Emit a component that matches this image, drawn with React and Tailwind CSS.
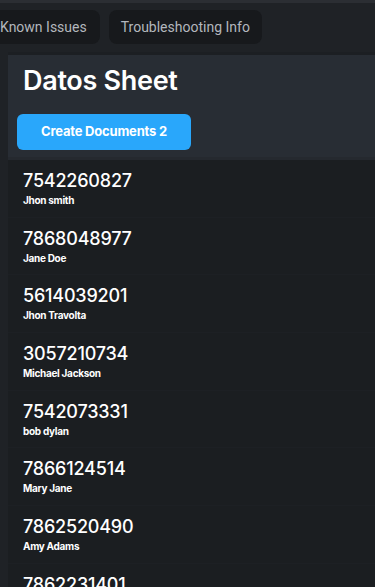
const rows = [
  ['7542260827', 'Jhon smith'],
  ['7868048977', 'Jane Doe'],
  ['5614039201', 'Jhon Travolta'],
  ['3057210734', 'Michael Jackson'],
  ['7542073331', 'bob dylan'],
  ['7866124514', 'Mary Jane'],
  ['7862520490', 'Amy Adams'],
  ['7862231401', 'Lisa Ray'],
]

export default function App() {
  return (
    <div className="h-[587px] w-[375px] overflow-hidden bg-[#1f2226] font-['Inter',sans-serif]">
      {/* tabs bar */}
      <div className="border-t-[3px] border-[#2b2e33] pt-[7px] pb-[8px]">
        <div className="flex gap-[9px] ml-[-13px] font-['Roboto',sans-serif] text-[14px] text-[#b3b7bd]">
          <div className="h-[34px] flex items-center pl-[13px] pr-[13px] rounded-[8px] bg-[#17191c] whitespace-nowrap">Known Issues</div>
          <div className="h-[34px] flex items-center px-[12px] rounded-[8px] bg-[#17191c] whitespace-nowrap">Troubleshooting Info</div>
        </div>
      </div>

      {/* sheet panel */}
      <div className="ml-[8px] border-t-[3px] border-[#1c1f23]">
        <div className="bg-[#282d34] pl-[9px] pt-[6px] pb-[7px] border-b-[3px] border-[#25292f]">
          <h1 className="text-[27px] leading-[40px] font-semibold text-white pl-[6px] tracking-[-0.3px]">Datos Sheet</h1>
          <button className="mt-[13px] w-[174px] h-[36px] rounded-[6px] bg-[#29a7fb] text-white text-[13px] font-bold tracking-[-0.2px]">
            Create Documents 2
          </button>
        </div>

        <div className="bg-[#1b1e21]">
          {rows.map(([phone, name]) => (
            <div key={phone} className="h-[57.7px] pl-[15px] pt-[9px] border-b border-[#1d2024]">
              <p className="text-[18px] leading-[24px] font-medium text-white tracking-[-0.2px]">{phone}</p>
              <p className="mt-[1px] text-[10px] leading-[13px] font-bold text-white tracking-[-0.3px]">{name}</p>
            </div>
          ))}
        </div>
      </div>
    </div>
  )
}
